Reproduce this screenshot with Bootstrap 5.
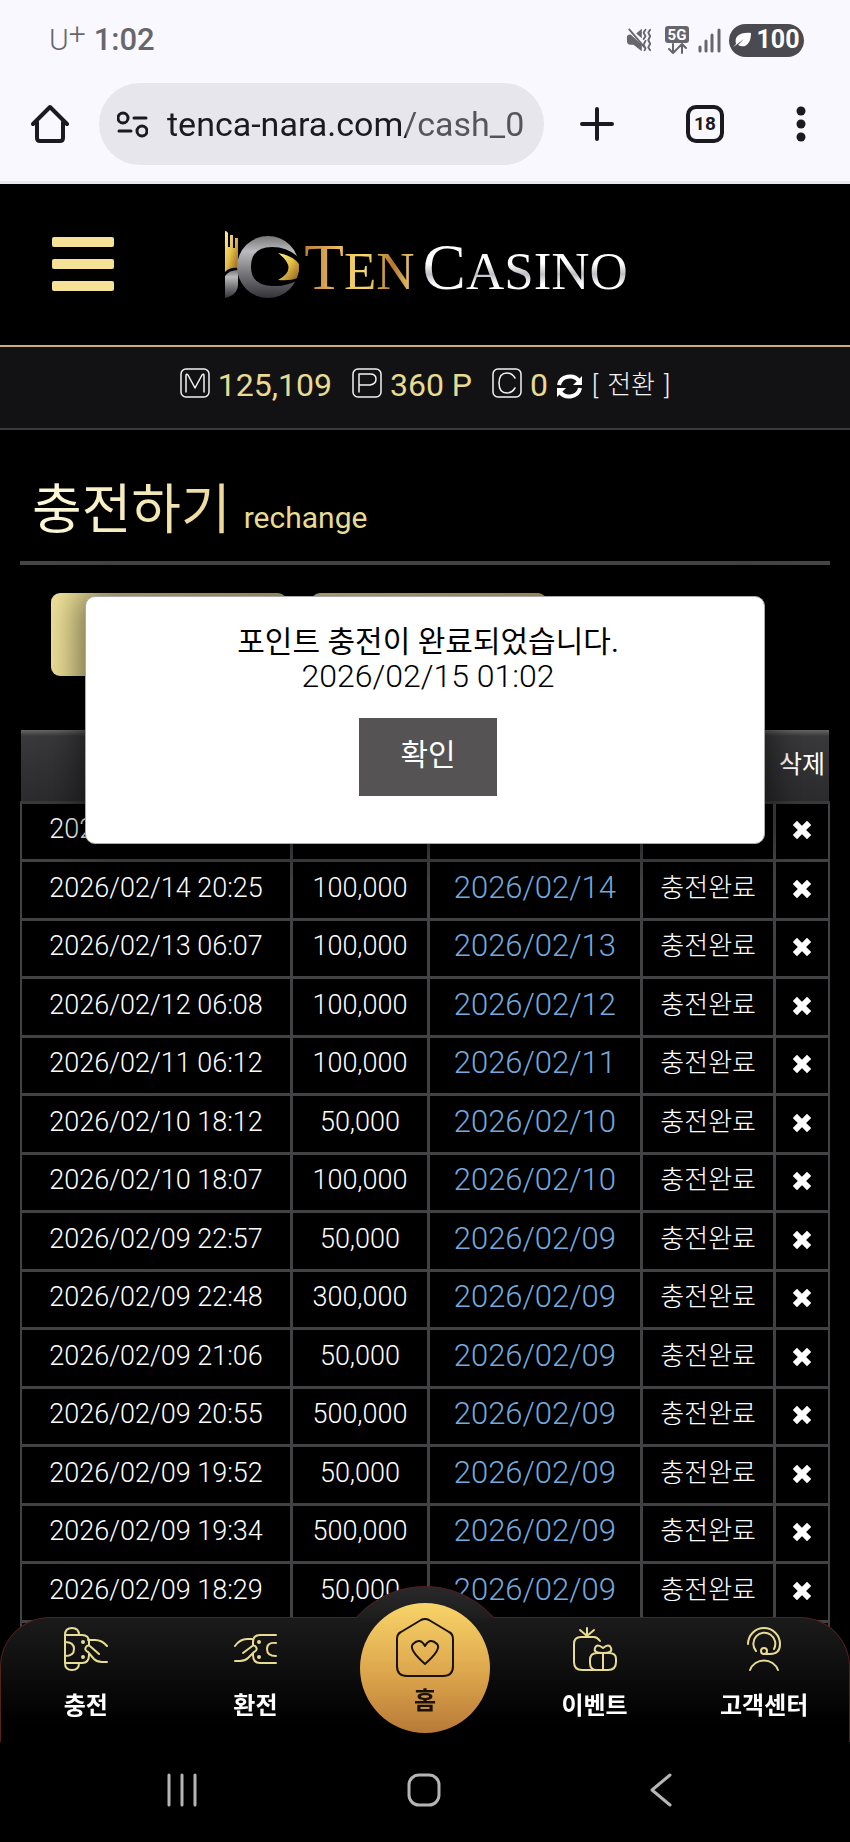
<!DOCTYPE html>
<html lang="ko">
<head>
<meta charset="utf-8">
<meta name="viewport" content="width=device-width, initial-scale=1">
<title>Ten Casino</title>
<link rel="stylesheet" href="https://cdn.jsdelivr.net/npm/bootstrap@5.3.0/dist/css/bootstrap.min.css">
<style>
body{background:#000;color:#fff;font-family:Roboto,"Noto Sans CJK KR",sans-serif;line-height:1.2}
svg{display:block;flex:none}
button{color:inherit}
.bare{background:none;border:0;padding:0}
.shell{height:100vh;position:relative}
.chrome{background:#f9f8ff;color:#1b1a20;height:184px;border-bottom:3px solid #e9e8f0}
.status{height:80px;padding:0 46px 0 49px;color:#67666c}
.carrier{font-size:30px;font-weight:300}
.carrier sup{font-size:30px;top:-6px;line-height:0}
.clock{font-size:31px;font-weight:500}
.battery{background:#4b4a50;color:#fff;border-radius:17px;height:33px;width:75px;font-size:25px;font-weight:700}
.toolbar{height:88px;padding:0 44px 0 31px}
.omnibox{background:#e7e6ec;border-radius:41px;height:82px;padding:0 17px 0 18px;margin:0 36px 0 30px;flex:0 1 445px;min-width:0}
.address{border:0;outline:0;padding:0;width:0;min-width:0;margin-left:19px;font-size:34px;color:transparent;background:linear-gradient(90deg,#1b1a20 239px,#55545a 239px);-webkit-background-clip:text;background-clip:text}
.tab-count{width:38px;height:38px;border:4px solid #1b1a20;border-radius:10px;font-size:19px;font-weight:700;line-height:30px}
.brandbar{height:163px;padding:0 50px 0 52px;border-bottom:2px solid #c8ae78}
.burger{padding-top:3px}
.wordmark{font-family:"Liberation Serif",serif;font-size:65px;line-height:64px;padding-top:8px}
.wordmark small{font-size:53px}
.gold-word{background:linear-gradient(90deg,#b9803a,#e9b75c 30%,#f4dd6a 55%,#b5762c 80%,#f3d77a);-webkit-background-clip:text;background-clip:text;color:transparent}
.steel-word{background:linear-gradient(180deg,#fff 45%,#bdbdc3 60%,#fff 74%);-webkit-background-clip:text;background-clip:text;color:transparent}
.wallet{background:#121214;height:83px;border-bottom:2px solid #3b3b3d;padding-bottom:4px;gap:20px;font-size:32px;color:#e8db92}
.wallet svg{margin-bottom:4px}
.wallet .swap{font-size:26px;font-weight:300;color:#f3f3f3;gap:9px}
.wallet .swap svg{margin-bottom:-3px}
.content{padding:0 20px}
.page-title{height:135px;border-bottom:4px solid #454446;padding:0 12px 18px;gap:13px}
.page-title h1{font-size:54px;line-height:64px;font-weight:400;margin:0;background:linear-gradient(100deg,#fffbe0,#f3e7b4 60%,#ecd596);-webkit-background-clip:text;background-clip:text;color:transparent}
.page-title span{font-size:30px;color:#e8db92;padding-bottom:7px}
.action-row{padding:28px 31px 54px;gap:24px}
.gold-btn{height:83px;width:236px;border-radius:9px;border:0;background:linear-gradient(110deg,#efe29a,#d3c27e)}
.ledger{width:100%;table-layout:fixed;border-collapse:collapse;text-align:center}
.col-date{width:33.500%}.col-sum{width:16.900%}.col-day{width:26.400%}.col-state{width:16.500%}
.ledger th{height:72px;font-size:25px;font-weight:400;background:linear-gradient(180deg,#666 0,#39393b 6px,#323234 50%,#2b2b2e);border-bottom:3px solid #39393b;white-space:nowrap;padding:0}
.ledger td{border:3px solid #424144;height:58px;padding:0 0 4px;font-size:27px;font-weight:300;white-space:nowrap;line-height:32px}
.ledger tr:nth-child(even) td{height:59px}
.ledger td:first-child{border-left-width:2px}
.ledger td:last-child{border-right-width:2px;padding-bottom:2px}
.ledger td:nth-child(3){font-size:31px;color:#74a9de}
.ledger td:nth-child(4){font-size:26px}
.ledger svg{margin:auto}
.notice{position:absolute;top:31px;left:65px;right:65px;height:248px;background:#fff;color:#000;border:1px solid #aaa;border-radius:10px;padding:27px 0 0 6px;box-shadow:0 0 36px 6px rgba(0,0,0,.55);text-align:center;font-size:32px;line-height:35px}
.notice strong{font-size:30px;font-weight:400}
.notice time{font-weight:300}
.notice button{display:block;margin:24px auto 0;width:138px;height:78px;border:0;border-radius:0;background:#565354;color:#fff;font-size:30px;padding:0 0 6px}
.dock-bar{position:relative;height:125px;border:1px solid #561f20;border-bottom:0;border-radius:50px 50px 0 0;background:linear-gradient(180deg,#1b1b1b,#000 85%)}
.dock-bump{position:absolute;left:50%;top:-32px;margin-left:-92px;width:184px;height:184px;border-radius:50%;border:1px solid #561f20;background:linear-gradient(180deg,#29292b,#1a1a1a 22%,#000 70%);clip-path:inset(0 0 152px)}
.dock a{color:#fff;text-decoration:none;font-size:24px;font-weight:700;line-height:30px;padding-top:9px;gap:18px;font-family:"Noto Sans CJK KR",sans-serif}
.dock .home-disc{margin-top:-15px;width:130px;height:130px;border-radius:50%;background:linear-gradient(180deg,#f8d469,#dca54c 55%,#b87a38);color:#1a1208;gap:6px;padding-top:15px}
.line{fill:none;stroke-linecap:round;stroke-linejoin:round}
.sysnav{height:100px;padding:0 21% 5px 19.500%}
</style>
<script src="https://cdn.jsdelivr.net/npm/bootstrap@5.3.0/dist/js/bootstrap.bundle.min.js"></script>
</head>
<body>
<div class="shell d-flex flex-column overflow-hidden">
<div class="chrome flex-shrink-0">
 <div class="status d-flex align-items-center justify-content-between">
  <div class="d-flex align-items-center gap-2"><span class="carrier">U<sup>+</sup></span><span class="clock">1:02</span></div>
  <div class="d-flex align-items-center gap-2">
   <svg width="26" height="26" viewBox="0 0 28 26" class="me-1"><path d="M1 10c0-2 1-3 4-3l12 11v7l-9-7H5c-3 0-4-2-4-4z" fill="#67666c"/><path d="M11 6l6-5v10z" fill="#67666c"/><path d="M3 1l17 20" stroke="#67666c" stroke-width="2"/><path d="M21 2l-2 3 2 4-2 3M21 14l-2 4 2 4-1 2M26 2l-2 3 2 4-2 4 2 4-2 4 2 3" class="line" stroke="#67666c" stroke-width="2"/></svg>
   <svg width="26" height="28" viewBox="0 0 26 28"><rect x="1" width="24" height="17" rx="3" fill="#67666c"/><text x="13" y="14" text-anchor="middle" font-family="Roboto" font-weight="700" font-size="15" fill="#fff">5G</text><path d="M9 18v8M5 23l4 4 4-4M18 27v-8M14 22l4-4 4 4" class="line" stroke="#67666c" stroke-width="2"/></svg>
   <svg width="23" height="25" viewBox="0 0 23 25"><path d="M2 19v4M8 13v10M14 7v16M21 2v21" class="line" stroke="#67666c" stroke-width="3"/></svg>
   <div class="battery d-flex align-items-center justify-content-center"><svg width="19" height="18" viewBox="0 0 19 18"><path d="M3 13C1 5 7 1 18 2c0 11-6 16-13 12l6-6-8 6-3 2" fill="#fff"/></svg><span class="ms-1">100</span></div>
  </div>
 </div>
 <div class="toolbar d-flex align-items-center">
  <button class="bare" aria-label="홈"><svg width="38" height="40" viewBox="0 0 38 40"><path d="M2 20L19 3l17 17M6 18v16q0 3 3 3h20q3 0 3-3V18" class="line" stroke="#1b1a20" stroke-width="4"/></svg></button>
  <div class="omnibox d-flex align-items-center">
   <svg width="31" height="27" viewBox="0 0 31 27"><g class="line" stroke="#1b1a20" stroke-width="3"><circle cx="6" cy="7" r="5"/><path d="M17 7h12M2 20h12"/><circle cx="25" cy="20" r="5"/></g></svg>
   <input class="address flex-grow-1" type="text" aria-label="주소" value="tenca-nara.com/cash_01">
  </div>
  <div class="d-flex align-items-center justify-content-between flex-grow-1">
   <button class="bare" aria-label="새 탭"><svg width="34" height="34" viewBox="0 0 34 34"><path d="M17 2v30M2 17h30" class="line" stroke="#1b1a20" stroke-width="4"/></svg></button>
   <button class="tab-count bg-transparent p-0">18</button>
   <button class="bare" aria-label="메뉴"><svg width="10" height="36" viewBox="0 0 10 36" fill="#1b1a20"><circle cx="5" cy="5" r="4.5"/><circle cx="5" cy="18" r="4.5"/><circle cx="5" cy="31" r="4.5"/></svg></button>
  </div>
 </div>
</div>

<header class="brandbar d-flex align-items-center flex-shrink-0">
 <div class="col"><button class="bare burger" aria-label="메뉴 열기"><svg width="62" height="54" viewBox="0 0 62 54" fill="#f6e297"><rect width="62" height="10" rx="2"/><rect y="22" width="62" height="10" rx="2"/><rect y="44" width="62" height="10" rx="2"/></svg></button></div>
 <a href="#" class="d-flex align-items-center text-decoration-none">
  <svg width="76" height="70" viewBox="0 0 76 70">
   <defs><linearGradient id="steel" x2="0" y2="1"><stop stop-color="#777"/><stop offset=".25" stop-color="#bcbcc0"/><stop offset=".6" stop-color="#77777b"/><stop offset="1" stop-color="#333338"/></linearGradient><linearGradient id="au" x2="1" y2="1"><stop stop-color="#fff29a"/><stop offset=".5" stop-color="#e3bd45"/><stop offset="1" stop-color="#8c5a1c"/></linearGradient></defs>
   <path d="M1 1q2 0 3 2v14h2V5h3v13h2V8h3v30Q6 37 1 42z" fill="url(#au)"/>
   <path d="M1 46q4-6 13-6v14q0 11-13 14z" fill="url(#steel)"/>
   <circle cx="44" cy="37" r="31" fill="url(#steel)"/>
   <path d="M27 37q0-20 21-20 17 0 28 12v20q-13 8-28 7-21-1-21-19z" fill="#000"/>
   <path d="M54 23q14 2 21 11v7l-2 7q-6 3-19 2 21-11 0-27z" fill="url(#au)"/>
  </svg>
  <span class="wordmark ms-1 text-nowrap"><span class="gold-word">T<small>EN</small></span><span class="steel-word ms-2">C<small>ASINO</small></span></span>
 </a>
 <div class="col"></div>
</header>

<div class="wallet d-flex align-items-center justify-content-center flex-shrink-0">
 <span class="d-flex align-items-center gap-2"><svg width="30" height="30" viewBox="0 0 30 30"><g class="line" stroke="#f2f2f2" stroke-width="1.500"><rect x="1" y="1" width="28" height="28" rx="5"/><path d="M6 24V8q0-3 2-1l7 13 7-13q2-2 2 1v16"/></g></svg><span>125,109</span></span>
 <span class="d-flex align-items-center gap-2"><svg width="30" height="30" viewBox="0 0 30 30"><g class="line" stroke="#f2f2f2" stroke-width="1.500"><rect x="1" y="1" width="28" height="28" rx="5"/><path d="M7 24V6h11q6 0 6 5t-6 6H7"/></g></svg><span>360 P</span></span>
 <span class="d-flex align-items-center gap-2"><svg width="30" height="30" viewBox="0 0 30 30"><g class="line" stroke="#f2f2f2" stroke-width="1.500"><rect x="1" y="1" width="28" height="28" rx="5"/><path d="M23 10q-3-5-8-5-8 0-8 10t8 10q5 0 8-5"/></g></svg><span>0</span>
 <button class="bare swap d-flex align-items-center"><svg width="27" height="27" viewBox="0 0 27 27"><path d="M3 12A11 10 0 0 1 23 8M24 15A11 10 0 0 1 4 19" fill="none" stroke="#fff" stroke-width="4"/><path d="M26 3v9h-9zM1 24v-9h9z" fill="#fff"/></svg><span>[</span><span>전환</span><span>]</span></button></span>
</div>

<main class="content">
 <div class="page-title d-flex align-items-end"><h1>충전하기</h1><span>rechange</span></div>
 <div class="position-relative">
  <div class="action-row d-flex"><button class="gold-btn" aria-label="충전"></button><button class="gold-btn" aria-label="내역"></button></div>
  <table class="ledger">
   <colgroup><col class="col-date"><col class="col-sum"><col class="col-day"><col class="col-state"><col></colgroup>
   <thead><tr><th></th><th></th><th></th><th></th><th>삭제</th></tr></thead>
   <tbody id="rows"></tbody>
  </table>
  <div class="notice" role="dialog"><strong>포인트 충전이 완료되었습니다.</strong><br><time>2026/02/15 01:02</time><button>확인</button></div>
 </div>
</main>

<footer class="dock fixed-bottom">
 <div class="dock-bar">
  <div class="dock-bump"></div>
  <nav class="row g-0 row-cols-5 position-relative">
   <a href="#" class="d-flex flex-column align-items-center"><svg width="44" height="44" viewBox="0 0 44 44"><g class="line" stroke="#e8db92" stroke-width="2"><path d="M1 8v28q0 7 7 7t7-7H1M1 8q0-7 7-7t7 7H1M1 8h17q7 0 7 7v3M25 26v2q0 8-7 8H1M1 15q9 0 9 7t-9 7M24 13h7q7 0 12 6M35 27l-8-7q-3-3-5 0t2 5l6 7q3 3 8 3h5"/></g><g fill="#e8db92"><circle cx="19" cy="15" r="2"/><circle cx="19" cy="30" r="2"/></g></svg>충전</a>
   <a href="#" class="d-flex flex-column align-items-center"><svg width="44" height="44" viewBox="0 0 44 44"><g class="line" stroke="#e8db92" stroke-width="2"><path d="M43 8H27q-7 0-7 7v3M20 26v2q0 8 7 8h16M43 16q-9-1-9 6t9 7M19 12h-5q-7 0-12 7M10 26l8-6q3-3 5 0t-2 5l-6 6q-3 3-8 3H2"/></g><g fill="#e8db92"><circle cx="26" cy="15" r="2"/><circle cx="26" cy="30" r="2"/></g></svg>환전</a>
   <div class="d-flex justify-content-center"><a href="#" class="home-disc d-flex flex-column align-items-center"><svg width="60" height="60" viewBox="0 0 60 60" class="line" stroke="#1a1208" stroke-width="2"><path d="M26 2q4-2 8 0l20 12q4 2 4 7v27q0 10-10 10H12Q2 58 2 48V21q0-5 4-7z"/><path d="M30 46Q13 31 18 26q7-7 12 2 5-9 12-2 5 5-12 20z"/></svg>홈</a></div>
   <a href="#" class="d-flex flex-column align-items-center"><svg width="44" height="44" viewBox="0 0 44 44" class="line" stroke="#e8db92" stroke-width="2"><path d="M27 14q-3-4-6-4H8q-7 0-7 7v18q0 8 8 8h26q8 0 8-8v-3q0-6-7-6H24q-7 0-7 7v3q0 7 7 7M30 26v17M30 26q-10 0-8-5t8 0q6-5 8 0t-8 5M14 9V1M14 9L7 3M14 9l7-6"/></svg>이벤트</a>
   <a href="#" class="d-flex flex-column align-items-center"><svg width="44" height="44" viewBox="0 0 44 44" class="line" stroke="#e8db92" stroke-width="2"><path d="M6 17A16 16 0 0 1 38 17q0 10-10 10h-6M14 24A11 11 0 1 1 32 22M8 43A15 15 0 0 1 36 43"/><circle cx="22" cy="24" r="3"/></svg>고객센터</a>
  </nav>
 </div>
 <div class="sysnav bg-black d-flex align-items-center justify-content-between">
  <button class="bare" aria-label="최근 앱"><svg width="32" height="34" viewBox="0 0 32 34"><path d="M3 2v30M16 2v30M29 2v30" class="line" stroke="#b5b4b7" stroke-width="3"/></svg></button>
  <button class="bare" aria-label="홈 화면"><svg width="34" height="34" viewBox="0 0 34 34"><rect x="2" y="2" width="30" height="30" rx="10" class="line" stroke="#b5b4b7" stroke-width="3"/></svg></button>
  <button class="bare" aria-label="뒤로"><svg width="22" height="34" viewBox="0 0 22 34"><path d="M20 2L2 17l18 15" class="line" stroke="#b5b4b7" stroke-width="3"/></svg></button>
 </div>
</footer>
</div>
<script>
const data=[["2026/02/15 01:02","","",""],["2026/02/14 20:25","100,000"],["2026/02/13 06:07","100,000"],["2026/02/12 06:08","100,000"],["2026/02/11 06:12","100,000"],["2026/02/10 18:12","50,000"],["2026/02/10 18:07","100,000"],["2026/02/09 22:57","50,000"],["2026/02/09 22:48","300,000"],["2026/02/09 21:06","50,000"],["2026/02/09 20:55","500,000"],["2026/02/09 19:52","50,000"],["2026/02/09 19:34","500,000"],["2026/02/09 18:29","50,000"]];
const cross='<button class="bare" aria-label="삭제"><svg width="18" height="18" viewBox="0 0 18 18"><path d="M4 4l10 10M14 4L4 14" fill="none" stroke="#fff" stroke-width="6" stroke-linecap="square" stroke-linejoin="round"/></svg></button>';
document.getElementById('rows').innerHTML=data.map(r=>`<tr><td>${r[0]}</td><td>${r[1]}</td><td>${r[2]??r[0].slice(0,10)}</td><td>${r[3]??'충전완료'}</td><td>${cross}</td></tr>`).join('')+'<tr><td></td><td></td><td></td><td></td><td></td></tr>';
</script>
</body>
</html>
